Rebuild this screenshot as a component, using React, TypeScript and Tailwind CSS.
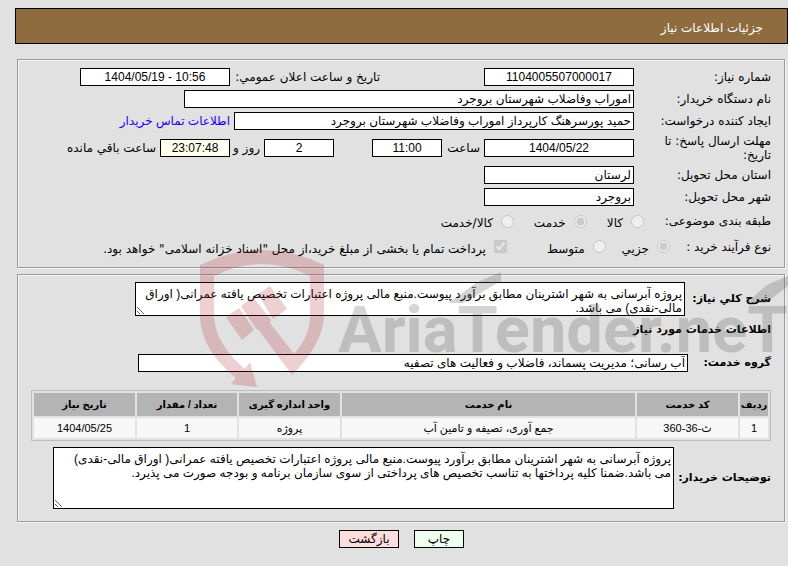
import React from 'react';

const valueFont = "font-['Liberation_Sans','DejaVu_Sans',sans-serif]";
const inputBase = `h-[18px] border border-black px-0.5 text-[12px] leading-4 outline-none ${valueFont}`;
const textareaBase = `resize overflow-hidden border border-black bg-white px-0.5 pt-1 text-[12px] leading-[14px] outline-none ${valueFont}`;
const fieldset = 'border border-[#9a9a9a] shadow-[1px_1px_0_#f4f4f4,inset_1px_1px_0_#f4f4f4]';

interface LabelProps {
  htmlFor?: string;
  children: React.ReactNode;
}

const Label: React.FC<LabelProps> = ({ htmlFor, children }) => (
  <label htmlFor={htmlFor} className="w-[137px] shrink-0 pl-6">{children}</label>
);

interface ChoiceProps {
  id: string;
  name: string;
  label: string;
  checked?: boolean;
}

const Choice: React.FC<ChoiceProps> = ({ id, name, label, checked }) => (
  <span className="flex items-center gap-2">
    <input type="radio" id={id} name={name} defaultChecked={checked} disabled className="size-[13px]" />
    <label htmlFor={id} className="pt-1">{label}</label>
  </span>
);

const Watermark: React.FC = () => (
  <svg className="pointer-events-none h-[150px] w-[788px]" viewBox="0 240 788 150" aria-hidden="true">
    <g fill="#aa1420" fillOpacity="0.2">
      <path d="M200 265Q262 235 324 265V317Q322 345 292 375L258 329L257 330L241 306L253 297L271 320L270 323L294 354Q310 336 310 317V276Q262 252 214 276V317Q216 345 245 369L250 362L257 387L231 384L236 378Q201 350 200 317Z" />
      <path d="M226 317L239 308L254 330L242 340ZM258 294L270 286L287 309L273 319Z" />
    </g>
    <g fill="#4d4d4d" opacity="0.23">
      <text x="338" y="352" fontSize="65" fontWeight="700" direction="ltr" fontFamily="Roboto, sans-serif">AriaTender.neT</text>
      <path d="M448 303L472 286Q475 283 480 281L501 272V281L463 303ZM747 303L762 289Q765 286 769 284L788 276V286L766 303Z" />
    </g>
  </svg>
);

const columns = [
  { title: 'ردیف', width: 'w-7' },
  { title: 'کد خدمت', width: 'w-[101px]' },
  { title: 'نام خدمت', width: '' },
  { title: 'واحد اندازه گیری', width: 'w-[101px]' },
  { title: 'تعداد / مقدار', width: 'w-[100px]' },
  { title: 'تاریخ نیاز', width: 'w-[101px]' },
];

const rows = [['1', 'ث-36-360', 'جمع آوری، تصیفه و تامین آب', 'پروژه', '1', '1404/05/25']];

export default function App() {
  return (
    <div dir="rtl" className="min-h-screen overflow-x-hidden bg-[#e1e1e1] pt-2 font-['DejaVu_Sans',sans-serif] text-[12px] leading-[14px] text-black">
      <header className="ml-[15px] flex h-9 items-center border border-black bg-[#8f6c40] px-6 pt-1 text-white">
        <h1>جزئیات اطلاعات نیاز</h1>
      </header>

      <main className="relative ml-[17px] mr-[3px] mt-[15px]">
        <section className={`pb-2 pr-[13px] pt-1.5 ${fieldset}`}>
          <div className="flex h-[22px] items-center">
            <Label htmlFor="number">شماره نیاز:</Label>
            <input id="number" readOnly className={`${inputBase} w-[150px] bg-white text-center`} defaultValue="1104005507000017" />
            <label htmlFor="announced" className="mr-[104px] w-[150px] shrink-0 whitespace-nowrap">تاریخ و ساعت اعلان عمومي:</label>
            <input id="announced" readOnly dir="ltr" className={`${inputBase} w-[150px] bg-white text-center`} defaultValue="1404/05/19 - 10:56" />
          </div>
          <div className="flex h-[22px] items-center">
            <Label htmlFor="org">نام دستگاه خریدار:</Label>
            <input id="org" readOnly className={`${inputBase} w-[450px] bg-white`} defaultValue="اموراب وفاضلاب شهرستان بروجرد" />
          </div>
          <div className="flex h-[22px] items-center">
            <Label htmlFor="creator">ایجاد کننده درخواست:</Label>
            <input id="creator" readOnly className={`${inputBase} w-[400px] bg-white`} defaultValue="حمید پورسرهنگ کارپرداز اموراب وفاضلاب شهرستان بروجرد" />
            <a href="#contact" className={`mr-1 text-[#1a00ff] ${valueFont}`}>اطلاعات تماس خریدار</a>
          </div>
          <div className="flex h-8 items-center">
            <Label htmlFor="deadline">مهلت ارسال پاسخ: تا تاریخ:</Label>
            <input id="deadline" readOnly className={`${inputBase} w-[150px] bg-white text-center`} defaultValue="1404/05/22" />
            <label htmlFor="hour" className="w-[42px] pr-1">ساعت</label>
            <input id="hour" readOnly className={`${inputBase} w-[70px] bg-white text-center`} defaultValue="11:00" />
            <input id="days" readOnly className={`${inputBase} mr-[38px] w-[70px] bg-white text-center`} defaultValue="2" />
            <label htmlFor="days" className="w-[34px] whitespace-nowrap pr-1">روز و</label>
            <input id="remaining" readOnly className={`${inputBase} w-[70px] bg-[#ffffee] text-center`} defaultValue="23:07:48" />
            <label htmlFor="remaining" className="mr-1">ساعت باقي مانده</label>
          </div>
          <div className="flex h-[22px] items-center">
            <Label htmlFor="province">استان محل تحویل:</Label>
            <input id="province" readOnly className={`${inputBase} w-[150px] bg-white`} defaultValue="لرستان" />
          </div>
          <div className="flex h-[22px] items-center">
            <Label htmlFor="city">شهر محل تحویل:</Label>
            <input id="city" readOnly className={`${inputBase} w-[150px] bg-white`} defaultValue="بروجرد" />
          </div>
          <div className="flex h-[26px] items-center">
            <span className="w-[127px]">طبقه بندی موضوعی:</span>
            <div className="flex gap-5">
              <Choice id="goods" name="subject" label="کالا" />
              <Choice id="service" name="subject" label="خدمت" checked />
              <Choice id="both" name="subject" label="کالا/خدمت" />
            </div>
          </div>
          <div className="flex h-[25px] items-center">
            <span className="w-[101px]">نوع فرآیند خرید :</span>
            <div className="flex gap-4">
              <Choice id="small" name="process" label="جزیي" checked />
              <Choice id="medium" name="process" label="متوسط" />
            </div>
            <span className="mr-10 flex items-center gap-2">
              <input type="checkbox" id="treasury" defaultChecked disabled className="size-[13px]" />
              <label htmlFor="treasury" className="pt-1">پرداخت تمام یا بخشی از مبلغ خرید،از محل "اسناد خزانه اسلامی" خواهد بود.</label>
            </span>
          </div>
        </section>

        <section className={`mt-1.5 px-[13px] pb-3 pt-[7px] ${fieldset}`}>
          <div className="flex items-center">
            <label htmlFor="summary" className="w-[86px] text-[11px] font-bold">شرح کلي نیاز:</label>
            <textarea id="summary" readOnly className={`h-[34px] w-[550px] ${textareaBase}`} defaultValue="پروژه آبرسانی به شهر اشترینان مطابق برآورد پیوست.منبع مالی پروژه اعتبارات تخصیص یافته عمرانی( اوراق مالی-نقدی) می باشد." />
          </div>
          <h2 className="mt-[7px] text-[11px] font-bold">اطلاعات خدمات مورد نیاز</h2>
          <div className="mt-[17px] flex items-center">
            <label htmlFor="group" className="w-[83px] text-[11px] font-bold">گروه خدمت:</label>
            <input id="group" readOnly className={`${inputBase} w-[550px] bg-white`} defaultValue="آب رسانی؛ مدیریت پسماند، فاضلاب و فعالیت های تصفیه" />
          </div>
          <table className={`mt-[18px] w-[740px] table-fixed border-separate border-spacing-0.5 border border-[#bcbcbc] text-center text-[11px] ${valueFont}`}>
            <thead>
              <tr className="h-[23px] bg-[#b4b4b4] text-[10px]">
                {columns.map(column => (
                  <th key={column.title} className={`whitespace-nowrap p-0 ${column.width}`}>{column.title}</th>
                ))}
              </tr>
            </thead>
            <tbody>
              {rows.map(row => (
                <tr key={row[0]} className="h-5 bg-[#f7f7f7]">
                  {row.map((cell, index) => <td key={index} className="p-0">{cell}</td>)}
                </tr>
              ))}
            </tbody>
          </table>
          <div className="mt-1.5 flex items-center">
            <label htmlFor="notes" className="w-[97px] whitespace-nowrap text-[11px] font-bold">توضیحات خریدار:</label>
            <textarea id="notes" readOnly className={`h-[62px] w-[621px] ${textareaBase}`} defaultValue="پروژه آبرسانی به شهر اشترینان مطابق برآورد پیوست.منبع مالی پروژه اعتبارات تخصیص یافته عمرانی( اوراق مالی-نقدی) می باشد.ضمنا کلیه پرداختها به تناسب تخصیص های پرداختی از سوی سازمان برنامه و بودجه صورت می پذیرد." />
          </div>
        </section>

        <div className="pointer-events-none absolute -left-[17px] top-[181px]">
          <Watermark />
        </div>
      </main>

      <footer className="mt-2 flex justify-center gap-[15px] pl-[15px]">
        <button className="h-[18px] w-[50px] border border-black bg-[#eeffee]">چاپ</button>
        <button className="h-[18px] w-[60px] border border-black bg-[#ffdddd]">بازگشت</button>
      </footer>
    </div>
  );
}
